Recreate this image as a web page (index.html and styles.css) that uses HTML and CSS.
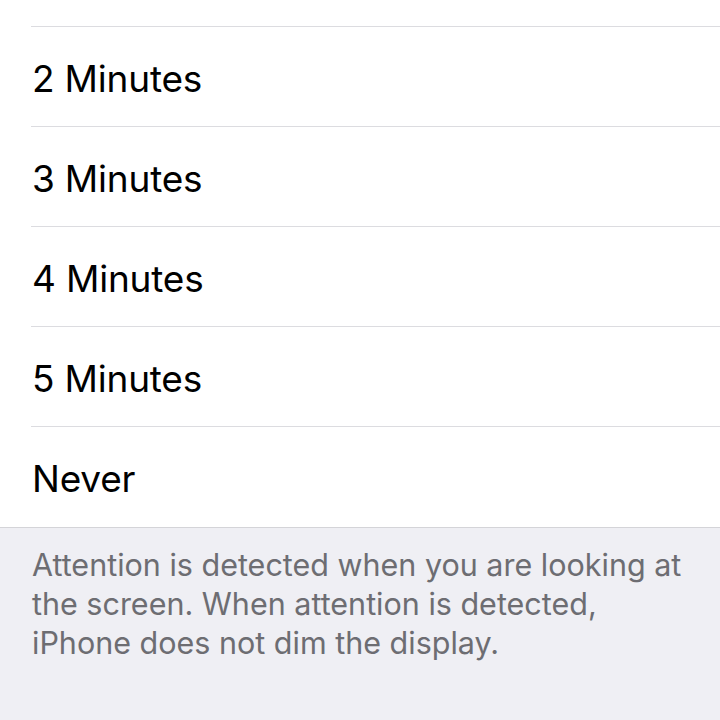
FILE: index.html
```html
<!DOCTYPE html>
<html lang="en">
<head>
  <meta charset="UTF-8" />
  <meta name="viewport" content="width=device-width, initial-scale=1.0"/>
  <title>Auto-Lock</title>
  <link rel="stylesheet" href="styles.css">
</head>
<body>
  <div class="group">
    <div class="row row-cut"></div>
    <div class="row"><span class="label">2 Minutes</span></div>
    <div class="row"><span class="label">3 Minutes</span></div>
    <div class="row"><span class="label">4 Minutes</span></div>
    <div class="row"><span class="label">5 Minutes</span></div>
    <div class="row row-last"><span class="label">Never</span></div>
  </div>

  <p class="footer">Attention is detected when you are looking at the screen. When attention is detected, iPhone does not dim the display.</p>
</body>
</html>
```

FILE: styles.css
```css
body {
  margin: 0;
  padding: 0;
  background: #efeff4;
  font-family: Inter, "Noto Sans", sans-serif;
  min-height: 100vh;
}

.group {
  background: #fff;
  border-bottom: 1px solid #d4d4d8;
}

.row {
  margin-left: 31px;
  border-bottom: 1px solid #dcdce0;
  display: flex;
  align-items: center;
  padding-top: 3px;
  height: 96px;
}

.row-cut {
  height: 26px;
  padding-top: 0;
}

.row-last {
  border-bottom: none;
  height: 97px;
}

.label {
  font-size: 37px;
  color: #000;
  padding-left: 1px;
  letter-spacing: -0.2px;
}

.footer {
  margin: 0;
  padding: 17px 24px 0 32px;
  font-size: 30.5px;
  line-height: 39px;
  color: #6d6d72;
}
```
